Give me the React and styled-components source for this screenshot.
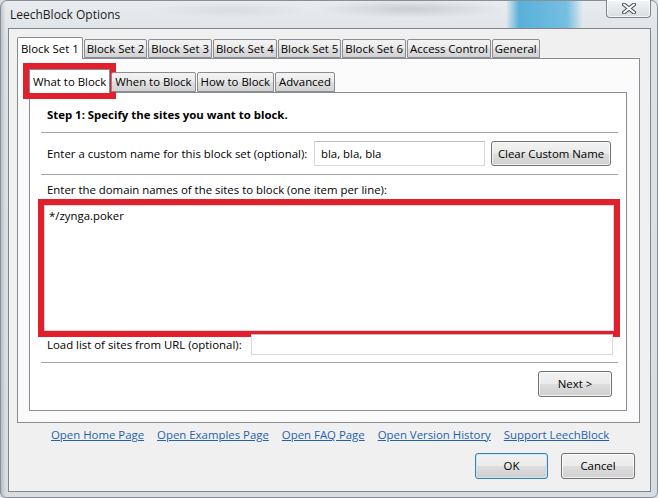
import React from "react";
import styled, { createGlobalStyle } from "styled-components";

const GlobalStyle = createGlobalStyle`
  html, body { margin: 0; padding: 0; }
  body {
    width: 658px; height: 498px; overflow: hidden;
    background: #d9dee3;
    font-family: "Open Sans", "Noto Sans", sans-serif;
    font-size: 11.4px;
    color: #000;
  }
  * { box-sizing: border-box; }
`;

const Window = styled.div`
  width: 658px;
  height: 498px;
  border: 1px solid #8a9096;
  border-radius: 7px 7px 6px 6px;
  padding: 0 6px 5px 7px;
  display: flex;
  flex-direction: column;
  background:
    linear-gradient(90deg, rgba(120,126,132,0.35) 0px, rgba(120,126,132,0.1) 3px, transparent 5px),
    linear-gradient(180deg, #e8ecf0 0px, #dde2e7 40px, #d8dde2 100%);
`;

const TitleBar = styled.div`
  height: 27px;
  display: flex;
  align-items: flex-start;
  justify-content: space-between;
  background:
    linear-gradient(90deg, transparent 505px, rgba(64,166,214,0.85) 518px, rgba(90,180,222,0.8) 566px, transparent 582px),
    radial-gradient(ellipse 95px 9px at 410px 8px, rgba(150,155,160,0.35), transparent),
    radial-gradient(ellipse 80px 8px at 230px 9px, rgba(170,175,180,0.22), transparent);
  margin: 0 -6px 0 -7px;
  padding: 0 6px 0 9px;
`;

const Title = styled.div`
  padding-top: 5px;
  font-size: 12px;
  color: #1c1c1c;
  line-height: 17px;
`;

const CloseButton = styled.div`
  width: 45px;
  height: 18px;
  margin-top: -1px;
  border: 1px solid #7d848c;
  border-top: none;
  border-radius: 0 0 4px 4px;
  background: linear-gradient(180deg, #f4f6f8 0%, #e6e9ec 50%, #d9dde1 100%);
  box-shadow: inset 0 0 0 1px rgba(255,255,255,0.7);
  display: flex;
  align-items: center;
  justify-content: center;
`;

const Client = styled.div`
  height: 464px;
  border: 1px solid #80868c;
  background: #f0f0f0;
  padding: 8px 0 0 8px;
  display: flex;
  flex-direction: column;
`;

const TabBox = styled.div`
  display: flex;
  flex-direction: column;
  margin-right: ${p => p.$mr || 0}px;
`;

const TabStrip = styled.div`
  display: flex;
  align-items: flex-end;
  gap: 1px;
  height: ${p => p.$h}px;
  position: relative;
  z-index: 1;
`;

const Tab = styled.div`
  height: ${p => (p.$selected ? p.$hs : p.$hu)}px;
  margin-bottom: ${p => (p.$selected ? -1 : 0)}px;
  padding: 0 ${p => p.$px || 5}px;
  border: 1px solid #898c95;
  border-bottom: ${p => (p.$selected ? "none" : "1px solid #898c95")};
  border-radius: ${p => (p.$mark ? "0" : "2px 2px 0 0")};
  background: ${p =>
    p.$selected
      ? "#ffffff"
      : "linear-gradient(180deg, #f3f3f3 0%, #ebebeb 48%, #dedede 52%, #d3d3d3 100%)"};
  display: flex;
  align-items: center;
  white-space: nowrap;
  line-height: 14px;
  outline: ${p => (p.$mark ? "6px solid #e2202b" : "none")};
`;

const Panel = styled.div`
  border: 1px solid #898c95;
  background: ${p => p.$bg};
  padding: ${p => p.$pad};
  display: flex;
  flex-direction: column;
`;

const Heading = styled.div`
  height: 39px;
  padding: 3px 0 0 17px;
  display: flex;
  align-items: center;
  font-weight: 700;
`;

const Separator = styled.div`
  height: 1px;
  margin: ${p => p.$mt || 0}px 8px 0 11px;
  background: #a5a5a5;
`;

const Row = styled.div`
  height: ${p => p.$h}px;
  margin-top: ${p => p.$mt || 0}px;
  display: flex;
  align-items: center;
  padding: 0 ${p => p.$pr || 0}px 0 17px;
`;

const Label = styled.div`
  flex: 1;
  white-space: nowrap;
  line-height: 16px;
`;

const TextInput = styled.div`
  width: ${p => p.$w}px;
  height: ${p => p.$h}px;
  border: 1px solid #d5d8dc;
  border-top-color: #b9bcc1;
  background: #fff;
  padding: 0 6px;
  display: flex;
  align-items: center;
  line-height: 16px;
`;

const Button = styled.div`
  width: ${p => p.$w}px;
  height: ${p => p.$h || 26}px;
  margin-left: ${p => p.$ml || 0}px;
  border: 1px solid ${p => (p.$default ? "#3c7fb1" : "#707070")};
  border-radius: 3px;
  background: linear-gradient(180deg, #f2f2f2 0%, #ebebeb 48%, #dddddd 52%, #cfcfcf 100%);
  box-shadow: ${p =>
    p.$default
      ? "inset 0 0 0 1px #c8e8f8"
      : "inset 0 0 0 1px rgba(255,255,255,0.75)"};
  display: flex;
  align-items: center;
  justify-content: center;
  line-height: 16px;
  white-space: nowrap;
`;

const FieldLabel = styled.div`
  margin-top: 7px;
  padding-left: 17px;
  line-height: 16px;
  white-space: nowrap;
`;

const TextArea = styled.div`
  height: 126px;
  margin: 7px 12px 0 14px;
  border: 1px solid #d3d6da;
  background: #fff;
  padding: 2px 4px;
  line-height: 16px;
  outline: 6px solid #e2202b;
`;

const ActionRow = styled.div`
  margin-top: ${p => p.$mt}px;
  display: flex;
  justify-content: flex-end;
  gap: ${p => p.$gap || 0}px;
  padding-right: ${p => p.$pr}px;
`;

const LinkRow = styled.div`
  margin-top: 4px;
  display: flex;
  gap: 13px;
  padding-left: 34px;
  line-height: 16px;
`;

const Link = styled.a`
  color: #1f62ae;
  text-decoration: underline;
  white-space: nowrap;
`;

const outerTabs = [
  "Block Set 1",
  "Block Set 2",
  "Block Set 3",
  "Block Set 4",
  "Block Set 5",
  "Block Set 6",
  "Access Control",
  "General",
];

const innerTabs = ["What to Block", "When to Block", "How to Block", "Advanced"];

const links = [
  "Open Home Page",
  "Open Examples Page",
  "Open FAQ Page",
  "Open Version History",
  "Support LeechBlock",
];

function CloseGlyph() {
  return (
    <svg width="14" height="11" viewBox="0 0 14 11">
      <path d="M2 1.5 L12 9.5 M12 1.5 L2 9.5" stroke="#4a4f55" strokeWidth="4" strokeLinecap="round" />
      <path d="M2 1.5 L12 9.5 M12 1.5 L2 9.5" stroke="#ffffff" strokeWidth="2" strokeLinecap="round" />
    </svg>
  );
}

export default function App() {
  return (
    <>
      <GlobalStyle />
      <Window>
        <TitleBar>
          <Title>LeechBlock Options</Title>
          <CloseButton>
            <CloseGlyph />
          </CloseButton>
        </TitleBar>
        <Client>
          <TabBox $mr={10}>
            <TabStrip $h={21}>
              {outerTabs.map((t, i) => (
                <Tab key={t} $selected={i === 0} $hs={22} $hu={19} $px={i === 0 ? 3 : 2}>
                  {t}
                </Tab>
              ))}
            </TabStrip>
            <Panel $bg="#fbfbfb" $pad="10px 12px 11px 11px">
              <TabBox>
                <TabStrip $h={23}>
                  {innerTabs.map((t, i) => (
                    <Tab key={t} $selected={i === 0} $mark={i === 0} $hs={24} $hu={20} $px={3}>
                      {t}
                    </Tab>
                  ))}
                </TabStrip>
                <Panel $bg="#ffffff" $pad="0">
                  <Heading>Step 1: Specify the sites you want to block.</Heading>
                  <Separator />
                  <Row $h={41} $pr={15}>
                    <Label>Enter a custom name for this block set (optional):</Label>
                    <TextInput $w={171} $h={25}>bla, bla, bla</TextInput>
                    <Button $w={120} $h={25} $ml={6}>Clear Custom Name</Button>
                  </Row>
                  <Separator />
                  <FieldLabel>Enter the domain names of the sites to block (one item per line):</FieldLabel>
                  <TextArea>*/zynga.poker</TextArea>
                  <Row $h={21} $mt={3} $pr={13}>
                    <Label>Load list of sites from URL (optional):</Label>
                    <TextInput $w={362} $h={21} />
                  </Row>
                  <Separator $mt={7} />
                  <ActionRow $mt={8} $pr={14}>
                    <Button $w={74}>Next &gt;</Button>
                  </ActionRow>
                  <ActionRow $mt={13} $pr={0} />
                </Panel>
              </TabBox>
            </Panel>
          </TabBox>
          <LinkRow>
            {links.map(l => (
              <Link key={l} href="#">{l}</Link>
            ))}
          </LinkRow>
          <ActionRow $mt={10} $gap={13} $pr={15}>
            <Button $w={73} $default>OK</Button>
            <Button $w={74}>Cancel</Button>
          </ActionRow>
        </Client>
      </Window>
    </>
  );
}
